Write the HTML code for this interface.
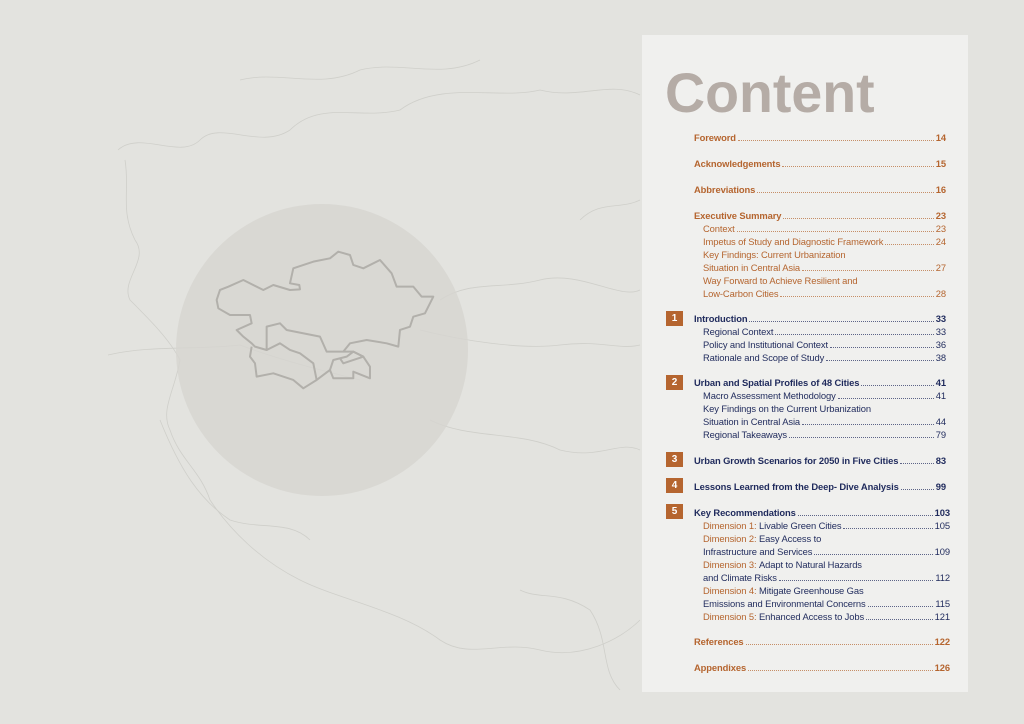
<!DOCTYPE html>
<html><head><meta charset="utf-8"><style>
body{margin:0;width:1024px;height:724px;background:#e3e3df;position:relative;overflow:hidden;font-family:"Liberation Sans",sans-serif}
.panel{position:absolute;left:642px;top:35px;width:326px;height:657px;background:#f0f0ee}
h1{position:absolute;left:665px;top:60px;margin:0;font-size:55.5px;font-weight:bold;color:#b5aca6;line-height:66px}
.l{position:absolute;left:694px;width:252px;height:13px;font-size:9.4px;line-height:13px;display:flex;white-space:nowrap;letter-spacing:-0.1px}
.l.s{left:703px;width:243px}
.l .f{flex:1;border-bottom:1px dotted currentColor;margin:0 2px 3.5px 2px;opacity:.7}
.o{color:#b5652f}.n{color:#1f2a5c}.b{font-weight:bold}
.bd{position:absolute;left:666px;width:17px;height:15px;background:#b5652f;color:#fff;font-size:10px;font-weight:bold;text-align:center;line-height:15px}
</style></head><body>
<svg width="1024" height="724" style="position:absolute;left:0;top:0" fill="none" stroke="#cfcfca" stroke-width="0.8">
<path d="M118 150 C140 130 180 160 200 140 C220 120 260 150 290 130 C320 100 360 120 400 110 C440 80 500 100 540 90 C580 100 610 80 640 95"/>
<path d="M125 160 C130 190 120 210 135 240 C150 260 120 280 130 300 C150 320 170 340 180 360 C175 390 160 410 170 430 C180 460 200 470 210 500 C230 530 260 560 300 580 C340 600 400 610 440 640 C470 660 500 640 540 650 C580 660 620 640 640 620"/>
<path d="M108 355 C150 345 200 350 240 345 C280 360 320 370 360 380"/>
<path d="M440 300 C470 280 500 290 540 280 C580 270 620 300 640 290"/>
<path d="M420 330 C460 340 520 350 560 345 C600 340 620 350 640 345"/>
<path d="M430 420 C470 440 520 430 560 450 C600 460 620 440 640 450"/>
<path d="M160 420 C180 470 200 500 230 520 C260 530 290 520 310 540"/>
<path d="M520 590 C540 600 560 590 590 610 C610 640 600 670 620 690"/>
<path d="M580 220 C600 200 620 210 640 200"/>
<path d="M240 80 C280 70 320 90 360 70 C400 60 440 80 480 60"/>
</svg>
<svg width="1024" height="724" style="position:absolute;left:0;top:0">
<circle cx="322" cy="350" r="146" fill="#d6d4d0" opacity="0.8"/>
<g transform="translate(100,150) scale(0.3333)" fill="none" stroke="#b2b0ab" stroke-width="6" stroke-linejoin="round">
<path d="M350 450 L360 420 L385 410 L430 390 L490 420 L520 405 L570 420 L600 418 L598 405 L570 400 L580 355 L640 335 L690 325 L715 305 L750 315 L760 345 L790 355 L840 330 L875 370 L890 410 L940 410 L965 440 L1000 440 L975 490 L940 500 L930 530 L900 540 L895 590 L860 580 L800 570 L750 580 L730 605 L680 605 L660 560 L560 540 L540 520 L500 530 L500 600 L465 590 L455 580 L430 560 L410 540 L455 520 L450 495 L390 495 L355 475 Z"/>
<path d="M455 590 L450 620 L465 640 L470 680 L520 670 L580 690 L610 715 L650 690 L690 660 L700 685 L760 685 L760 665 L810 685 L810 650 L790 620 L760 605 L740 620 L700 630 L690 660"/>
<path d="M500 600 L540 580 L570 600 L600 610 L640 640 L650 690"/>
<path d="M730 605 L760 605 L790 620 L730 640 L720 625"/>
</g>
</svg>
<div class="panel"></div>
<h1>Content</h1>

<div class="l o b" style="top:131px">Foreword<span class="f"></span>14</div>
<div class="l o b" style="top:157px">Acknowledgements<span class="f"></span>15</div>
<div class="l o b" style="top:183px">Abbreviations<span class="f"></span>16</div>
<div class="l o b" style="top:209px">Executive Summary<span class="f"></span>23</div>
<div class="l s o" style="top:222px">Context<span class="f"></span>23</div>
<div class="l s o" style="top:235px">Impetus of Study and Diagnostic Framework<span class="f"></span>24</div>
<div class="l s o" style="top:248px">Key Findings: Current Urbanization</div>
<div class="l s o" style="top:261px">Situation in Central Asia<span class="f"></span>27</div>
<div class="l s o" style="top:274px">Way Forward to Achieve Resilient and</div>
<div class="l s o" style="top:287px">Low-Carbon Cities<span class="f"></span>28</div>

<div class="bd" style="top:311px">1</div>
<div class="l n b" style="top:312px">Introduction<span class="f"></span>33</div>
<div class="l s n" style="top:325px">Regional Context<span class="f"></span>33</div>
<div class="l s n" style="top:338px">Policy and Institutional Context<span class="f"></span>36</div>
<div class="l s n" style="top:351px">Rationale and Scope of Study<span class="f"></span>38</div>

<div class="bd" style="top:375px">2</div>
<div class="l n b" style="top:376px">Urban and Spatial Profiles of 48 Cities<span class="f"></span>41</div>
<div class="l s n" style="top:389px">Macro Assessment Methodology<span class="f"></span>41</div>
<div class="l s n" style="top:402px">Key Findings on the Current Urbanization</div>
<div class="l s n" style="top:415px">Situation in Central Asia<span class="f"></span>44</div>
<div class="l s n" style="top:428px">Regional Takeaways<span class="f"></span>79</div>

<div class="bd" style="top:452px">3</div>
<div class="l n b" style="top:454px">Urban Growth Scenarios for 2050 in Five Cities<span class="f"></span>83</div>
<div class="bd" style="top:478px">4</div>
<div class="l n b" style="top:480px">Lessons Learned from the Deep- Dive Analysis<span class="f"></span>99</div>

<div class="bd" style="top:504px">5</div>
<div class="l n b" style="top:506px;width:256px">Key Recommendations<span class="f"></span>103</div>
<div class="l s n" style="top:519px;width:247px"><span class="o">Dimension 1:&nbsp;</span>Livable Green Cities<span class="f"></span>105</div>
<div class="l s n" style="top:532px"><span class="o">Dimension 2:&nbsp;</span>Easy Access to</div>
<div class="l s n" style="top:545px;width:247px">Infrastructure and Services<span class="f"></span>109</div>
<div class="l s n" style="top:558px"><span class="o">Dimension 3:&nbsp;</span>Adapt to Natural Hazards</div>
<div class="l s n" style="top:571px;width:247px">and Climate Risks<span class="f"></span>112</div>
<div class="l s n" style="top:584px"><span class="o">Dimension 4:&nbsp;</span>Mitigate Greenhouse Gas</div>
<div class="l s n" style="top:597px;width:247px">Emissions and Environmental Concerns<span class="f"></span>115</div>
<div class="l s n" style="top:610px;width:247px"><span class="o">Dimension 5:&nbsp;</span>Enhanced Access to Jobs<span class="f"></span>121</div>

<div class="l o b" style="top:635px;width:256px">References<span class="f"></span>122</div>
<div class="l o b" style="top:661px;width:256px">Appendixes<span class="f"></span>126</div>
</body></html>
